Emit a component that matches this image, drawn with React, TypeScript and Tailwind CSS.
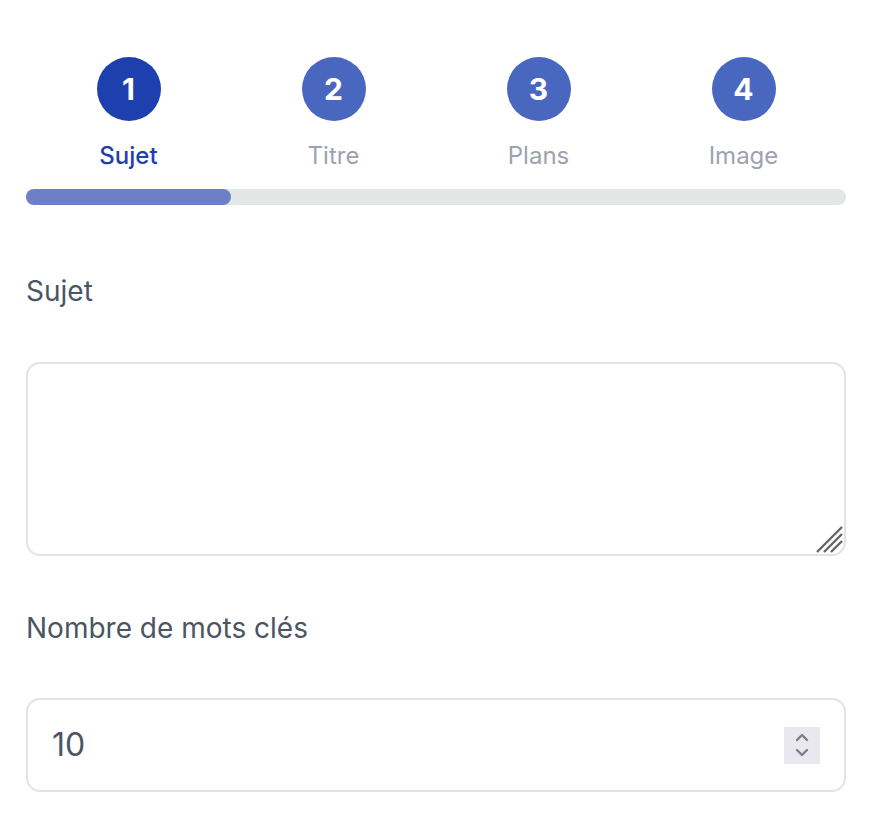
import { useState } from "react";

const steps = [
  { n: 1, label: "Sujet" },
  { n: 2, label: "Titre" },
  { n: 3, label: "Plans" },
  { n: 4, label: "Image" },
];

const App = () => {
  const [current] = useState(1);
  const [subject, setSubject] = useState("");
  const [count, setCount] = useState(10);

  return (
    <div
      className="min-h-screen bg-white px-[26px] pt-[57px]"
      style={{ fontFamily: "Inter, 'Noto Sans', sans-serif" }}
    >
      {/* Stepper */}
      <div className="grid grid-cols-4">
        {steps.map((step) => {
          const active = step.n === current;
          return (
            <div key={step.n} className="flex flex-col items-center">
              <div
                className={
                  active
                    ? "flex h-16 w-16 items-center justify-center rounded-full bg-[#1e40af] text-[30px] font-bold text-white"
                    : "flex h-16 w-16 items-center justify-center rounded-full bg-[#4a67c0] text-[30px] font-bold text-white"
                }
              >
                {step.n}
              </div>
              <span
                className={
                  active
                    ? "mt-5 text-2xl leading-[30px] font-medium text-[#1e40af]"
                    : "mt-5 text-2xl leading-[30px] text-[#9ca3af]"
                }
              >
                {step.label}
              </span>
            </div>
          );
        })}
      </div>

      <div className="mt-[18px] h-4 w-full rounded-full bg-[#e4e6e6]">
        <div
          className="h-4 rounded-full bg-[#6b80c5]"
          style={{ width: `${(current / steps.length) * 100}%` }}
        />
      </div>

      {/* Form */}
      <label className="mt-[70px] block text-[28px] leading-8 text-[#4b5563]">Sujet</label>
      <div className="relative mt-[55px]">
        <textarea
          value={subject}
          onChange={(e) => setSubject(e.target.value)}
          className="block h-[194px] w-full resize-none rounded-[14px] border-2 border-[#e3e3e3] px-6 py-4 text-[28px] text-[#4b5563] outline-none"
        />
        {/* resize grip */}
        <svg
          className="pointer-events-none absolute right-[3px] bottom-[3px]"
          width="28"
          height="28"
          viewBox="0 0 28 28"
          stroke="#666666"
          strokeWidth="2.4"
        >
          <path d="M2 27 L27 2" />
          <path d="M9 27 L27 9" />
          <path d="M16 27 L27 16" />
        </svg>
      </div>

      <label className="mt-[56px] block text-[28px] leading-8 text-[#4b5563]">Nombre de mots clés</label>
      <div className="mt-[54px] flex h-[94px] w-full items-center justify-between rounded-[14px] border-2 border-[#e3e3e3] pl-6 pr-6">
        <input
          type="text"
          value={count}
          onChange={(e) => setCount(Number(e.target.value) || 0)}
          className="w-40 text-[32px] text-[#4b5563] outline-none"
        />
        <div className="flex h-[37px] w-9 flex-col items-center justify-center bg-[#e8e8ee]">
          <svg width="16" height="28" viewBox="0 0 16 28" fill="none" stroke="#7c7c88" strokeWidth="2.4" strokeLinecap="round" strokeLinejoin="round">
            <path d="M3 9 L8 4 L13 9" />
            <path d="M3 19 L8 24 L13 19" />
          </svg>
        </div>
      </div>
    </div>
  );
};

export default App;
